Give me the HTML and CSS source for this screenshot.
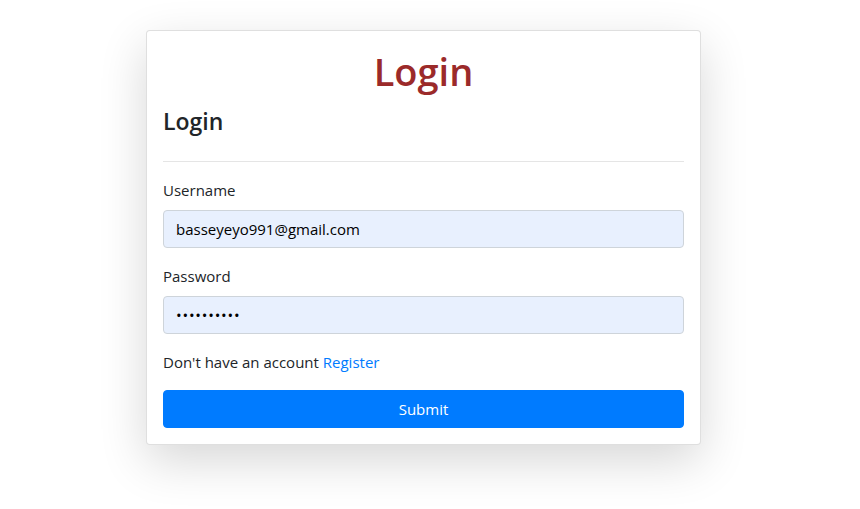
FILE: index.html
```html
<!DOCTYPE html>
<html lang="en">
<head>
<meta charset="utf-8">
<title>Login</title>
<link rel="stylesheet" href="styles.css">
</head>
<body>
<div class="page">
  <div class="card">
    <h1 class="title">Login</h1>
    <h4 class="subtitle">Login</h4>
    <hr class="divider">
    <form class="form">
      <div class="group">
        <label class="label" for="u">Username</label>
        <input class="control" id="u" type="text" value="basseyeyo991@gmail.com">
      </div>
      <div class="group">
        <label class="label" for="p">Password</label>
        <input class="control control-secret" id="p" type="password" value="abcdefghij">
      </div>
      <p class="note">Don't have an account <a class="link" href="#">Register</a></p>
      <button class="btn" type="button">Submit</button>
    </form>
  </div>
</div>
</body>
</html>
```
FILE: styles.css
```css
* { box-sizing: border-box; }
html, body { margin: 0; padding: 0; background: #fff; }
body {
  font-family: "Open Sans", "Noto Sans", sans-serif;
  font-size: 15px;
  line-height: 1.5;
  color: #212529;
  min-height: 509px;
}
.page {
  width: 846px;
  min-height: 509px;
  padding-top: 30px;
  display: flex;
  justify-content: center;
  align-items: flex-start;
}
.card {
  width: 555px;
  margin-left: 1px;
  border: 1px solid rgba(0,0,0,.125);
  border-radius: 4px;
  background: #fff;
  padding: 16px;
  box-shadow: 0 1rem 3rem rgba(0,0,0,.16);
}
.title {
  margin: 0 0 12px;
  text-align: center;
  font-size: 38px;
  line-height: 48px;
  font-weight: 600;
  color: #9b2a2a;
}
.subtitle {
  margin: 0;
  font-size: 23px;
  line-height: 28.8px;
  font-weight: 600;
}
.divider {
  margin: 25px 0 16px;
  border: 0;
  border-top: 1px solid rgba(0,0,0,.1);
}
.group { margin-bottom: 16px; }
.label {
  display: block;
  margin-bottom: 8px;
  line-height: 24px;
}
.control {
  display: block;
  width: 100%;
  height: 38px;
  padding: 6px 12px;
  font-family: inherit;
  font-size: 15px;
  color: #000;
  background: #e8f0fe;
  border: 1px solid #ced4da;
  border-radius: 4px;
}
.control-secret { letter-spacing: 0.8px; }
.note { margin: 0 0 16px; line-height: 24px; }
.link { color: #007bff; text-decoration: none; }
.btn {
  display: block;
  width: 100%;
  height: 38px;
  border: 1px solid #007bff;
  background: #007bff;
  color: #fff;
  font-family: inherit;
  font-size: 15px;
  border-radius: 4px;
}
```
